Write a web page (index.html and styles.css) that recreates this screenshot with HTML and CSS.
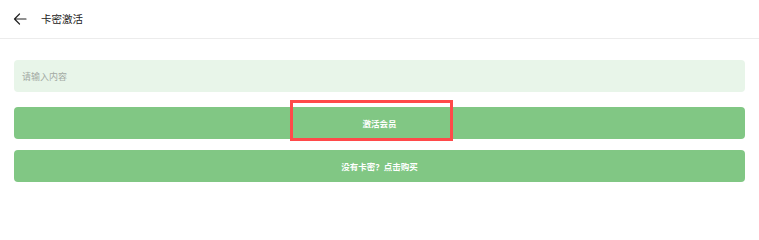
FILE: index.html
```html
<!DOCTYPE html>
<html lang="zh">
<head>
<meta charset="utf-8">
<title>卡密激活</title>
<link rel="stylesheet" href="styles.css">
</head>
<body>
<header class="topbar">
  <svg class="back" width="14" height="12" viewBox="0 0 14 12" aria-hidden="true">
    <path d="M13 6H1.5M6.5 1L1.5 6l5 5" fill="none" stroke="#222" stroke-width="1.2" stroke-linecap="round" stroke-linejoin="round"/>
  </svg>
  <span class="title">卡密激活</span>
</header>
<main class="content">
  <div class="field"><span class="placeholder">请输入内容</span></div>
  <div class="btn btn-primary">激活会员<span class="highlight"></span></div>
  <div class="btn">没有卡密？点击购买</div>
</main>
</body>
</html>
```
FILE: styles.css
```css
* { box-sizing: border-box; }
html, body { margin: 0; padding: 0; background: #fff; }
body { font-family: "Noto Sans CJK SC", "Noto Sans", sans-serif; }
.topbar {
  height: 39px;
  border-bottom: 1px solid #ececec;
  display: flex;
  align-items: center;
  padding-left: 13px;
}
.back { display: block; margin-right: 14px; }
.title { font-size: 10.5px; color: #222; line-height: 1; }
.content {
  padding: 21px 14px 0 14px;
  display: flex;
  flex-direction: column;
}
.field {
  height: 32px;
  background: #e8f5e9;
  border-radius: 4px;
  display: flex;
  align-items: center;
  padding-left: 8px;
}
.placeholder { font-size: 9px; color: #a3aaa4; }
.btn {
  height: 32px;
  background: #81c784;
  border-radius: 4px;
  display: flex;
  align-items: center;
  justify-content: center;
  color: #fff;
  font-size: 8.5px;
  font-weight: 700;
  margin-top: 11px;
  position: relative;
}
.btn-primary { margin-top: 15px; }
.highlight {
  position: absolute;
  left: 276px;
  top: -7px;
  width: 163px;
  height: 41px;
  border: 3px solid #ff4a4a;
}
```
